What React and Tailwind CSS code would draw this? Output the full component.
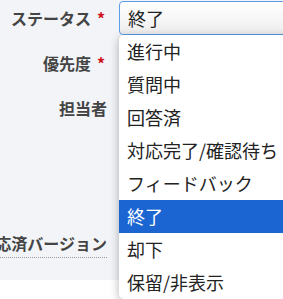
const options = ['進行中', '質問中', '回答済', '対応完了/確認待ち', 'フィードバック', '終了', '却下', '保留/非表示'];

const jp = { fontFamily: '"Noto Sans CJK JP", "Noto Sans", sans-serif' };

const Label = ({ children, required }) => (
  <div className="w-[107px] shrink-0 flex justify-end items-center whitespace-nowrap text-[16px] font-bold text-[#444]">
    <span>{children}</span>
    {required && <span className="ml-[6px] w-[10px] text-[#d0101a]">*</span>}
  </div>
);

export default function App() {
  return (
    <div className="relative w-[283px] h-[299px] overflow-hidden bg-white" style={jp}>
      <div className="h-[280px] bg-[#f2f4f8] pt-[1px] flex flex-col gap-[10px]">
        <div className="h-[34px] flex items-center gap-[12px]">
          <Label required>ステータス</Label>
          <div className="h-[34px] flex-1 -mr-[4px] flex items-center px-[8px] border border-[#5a9ee8] rounded-[4px] bg-gradient-to-b from-white to-[#eeeeee] text-[18px] text-[#222]">
            終了
          </div>
        </div>
        <div className="h-[35px] flex items-center">
          <Label required>優先度</Label>
        </div>
        <div className="h-[35px] flex items-center">
          <Label>担当者</Label>
        </div>
        <div className="h-[35px]" />
        <div className="h-[35px]" />
        <div className="h-[35px] flex items-center">
          <div className="w-[107px] shrink-0 flex justify-end whitespace-nowrap text-[16px] font-bold text-[#444] leading-[24px] pt-[3px] pb-[2px] border-b border-dotted border-[#999]">
            対応済バージョン
          </div>
        </div>
      </div>

      <ul className="absolute left-[119px] top-[35px] w-[180px] bg-white rounded-[5px] shadow-[0_2px_10px_rgba(0,0,0,0.3)] py-0">
        {options.map((o) => (
          <li
            key={o}
            className={
              o === '終了'
                ? 'h-[33px] leading-[33px] px-[8px] text-[18px] whitespace-nowrap bg-[#1a65d1] text-white'
                : 'h-[33px] leading-[33px] px-[8px] text-[18px] whitespace-nowrap text-[#222]'
            }
          >
            {o}
          </li>
        ))}
      </ul>
    </div>
  );
}
